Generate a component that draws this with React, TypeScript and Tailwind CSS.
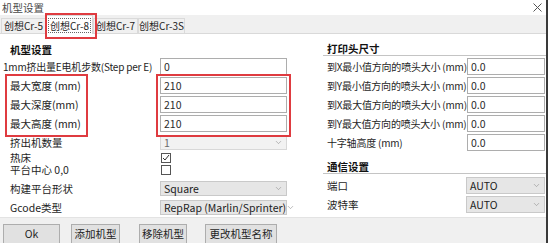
import { ChevronDown } from "lucide-react";

function TextBox({ value, className = "" }: { value: string; className?: string }) {
  return (
    <div className={`h-[17px] border border-[#adadad] bg-white px-[3px] text-[#2b2b2b] leading-[15px] ${className}`}>
      {value}
    </div>
  );
}

function Select({ value, disabled = false, className = "" }: { value: string; disabled?: boolean; className?: string }) {
  return (
    <div
      className={`flex items-center justify-between border px-[3px] leading-[13px] whitespace-nowrap ${
        disabled ? "bg-[#f2f2f2] border-[#d8d8d8] text-[#6b6b6b]" : "bg-[#e6e6e6] border-[#c9c9c9] text-[#222]"
      } ${className}`}
    >
      <span>{value}</span>
      <ChevronDown size={9} strokeWidth={1.5} className="text-[#8a8a8a] shrink-0" />
    </div>
  );
}

function Check({ checked }: { checked?: boolean }) {
  return (
    <div className="w-[10px] h-[10px] border border-[#555] bg-white flex items-center justify-center">
      {checked && (
        <svg width="8" height="8" viewBox="0 0 8 8">
          <path d="M1 4 L3 6 L7 1" fill="none" stroke="#333" strokeWidth="1" />
        </svg>
      )}
    </div>
  );
}

const leftRows = ["最大宽度 (mm)", "最大深度(mm)", "最大高度 (mm)"];

const nozzleRows = [
  "到X最小值方向的喷头大小 (mm)",
  "到Y最小值方向的喷头大小 (mm)",
  "到X最大值方向的喷头大小 (mm)",
  "到Y最大值方向的喷头大小 (mm)",
  "十字轴高度 (mm)",
];

const tabs = [
  { name: "创想Cr-5", w: "w-[45px]" },
  { name: "创想Cr-8", w: "w-[47px]", active: true },
  { name: "创想Cr-7", w: "w-[45px]" },
  { name: "创想Cr-3S", w: "w-[47px]" },
];

export default function App() {
  return (
    <div className="relative w-[548px] h-[243px] overflow-hidden bg-white border-r-2 border-[#3a3a3a] text-[10.5px] text-[#1e1e1e] whitespace-nowrap font-['Noto_Sans_CJK_SC',sans-serif]">
      {/* title */}
      <div className="flex items-center justify-between h-[15px] pl-[2px] pr-[4px]">
        <span className="text-[#4a4a4a] leading-[14px]">机型设置</span>
        <svg width="9" height="9" viewBox="0 0 9 9">
          <path d="M0.5 0.5 L8.5 8.5 M8.5 0.5 L0.5 8.5" stroke="#555" strokeWidth="1" />
        </svg>
      </div>

      {/* tab strip */}
      <div className="flex items-end h-[19px] pl-[1px] bg-[#f0f0f0] border-b border-[#d9d9d9]">
        {tabs.map((t) =>
          t.active ? (
            <div key={t.name} className={`${t.w} -mb-px h-[19px] bg-white border border-b-0 border-[#d9d9d9] flex items-center justify-center`}>
              <span className="px-[1px] leading-[13px] border border-dotted border-[#666] text-[10px]">{t.name}</span>
            </div>
          ) : (
            <div key={t.name} className={`${t.w} h-[15px] border border-b-0 border-[#dadada] flex items-center justify-center leading-[14px] text-[10px]`}>
              {t.name}
            </div>
          )
        )}
      </div>

      {/* content */}
      <div className="flex h-[183px]">
        <div className="w-[327px] shrink-0 pl-[10px] pt-[9px]">
          <div className="h-[14px] leading-[14px] font-bold text-[#111]">机型设置</div>
          <div className="flex items-center h-[19px]">
            <span className="w-[154px] -ml-[7px] text-[10px] tracking-[-0.2px]">1mm挤出量E电机步数(Step per E)</span>
            <TextBox value="0" className="w-[127px] ml-[3px]" />
          </div>
          {leftRows.map((l) => (
            <div key={l} className="flex items-center h-[19px]">
              <span className="w-[150px]">{l}</span>
              <TextBox value="210" className="w-[127px]" />
            </div>
          ))}
          <div className="flex items-center h-[19px]">
            <span className="w-[150px]">挤出机数量</span>
            <Select value="1" disabled className="w-[127px] h-[15px]" />
          </div>
          <div className="flex items-center h-[12px]">
            <span className="w-[151px] leading-[12px]">热床</span>
            <Check checked />
          </div>
          <div className="flex items-center h-[12px]">
            <span className="w-[151px] leading-[12px]">平台中心 0,0</span>
            <Check />
          </div>
          <div className="flex items-center h-[19px] mt-[3px]">
            <span className="w-[150px]">构建平台形状</span>
            <Select value="Square" className="w-[127px] h-[15px]" />
          </div>
          <div className="flex items-center h-[19px]">
            <span className="w-[150px]">Gcode类型</span>
            <Select value="RepRap (Marlin/Sprinter)" className="w-[127px] h-[15px]" />
          </div>
        </div>

        <div className="flex-1 pt-[8px]">
          <div className="h-[14px] -ml-[4px] pl-[4px] leading-[13px] font-bold text-[#111] border-b border-[#c4c4c4] mb-px">打印头尺寸</div>
          {nozzleRows.map((l) => (
            <div key={l} className="flex items-center h-[19px]">
              <span className="w-[140px] text-[10px] tracking-[-0.2px]">{l}</span>
              <TextBox value="0.0" className="w-[78px]" />
            </div>
          ))}
          <div className="h-[14px] mt-[8px] -ml-[4px] pl-[4px] leading-[13px] font-bold text-[#111] border-b border-[#c4c4c4] mb-[2px]">通信设置</div>
          <div className="flex items-center h-[19px]">
            <span className="w-[139px]">端口</span>
            <Select value="AUTO" className="w-[79px] h-[17px]" />
          </div>
          <div className="flex items-center h-[19px]">
            <span className="w-[139px]">波特率</span>
            <Select value="AUTO" className="w-[79px] h-[17px]" />
          </div>
        </div>
      </div>

      {/* bottom buttons */}
      <div className="flex items-start h-[26px] pt-[6px] pl-[3px] bg-[#f0f0f0] border-t border-[#e3e3e3]">
        <button className="w-[57px] h-[20px] bg-[#e1e1e1] border border-[#adadad] leading-[18px]">Ok</button>
        <button className="w-[49px] h-[20px] ml-[11px] bg-[#e1e1e1] border border-[#adadad] leading-[18px]">添加机型</button>
        <button className="w-[48px] h-[20px] ml-[19px] bg-[#e1e1e1] border border-[#adadad] leading-[18px]">移除机型</button>
        <button className="w-[72px] h-[20px] ml-[18px] bg-[#e1e1e1] border border-[#adadad] leading-[18px]">更改机型名称</button>
      </div>

      {/* red highlight annotations */}
      <div className="absolute left-[45px] top-[13px] w-[52px] h-[26px] border-2 border-[#df3b40]" />
      <div className="absolute left-[5px] top-[74px] w-[83px] h-[63px] border-2 border-[#df3b40]" />
      <div className="absolute left-[156px] top-[74px] w-[135px] h-[63px] border-2 border-[#df3b40]" />
    </div>
  );
}
